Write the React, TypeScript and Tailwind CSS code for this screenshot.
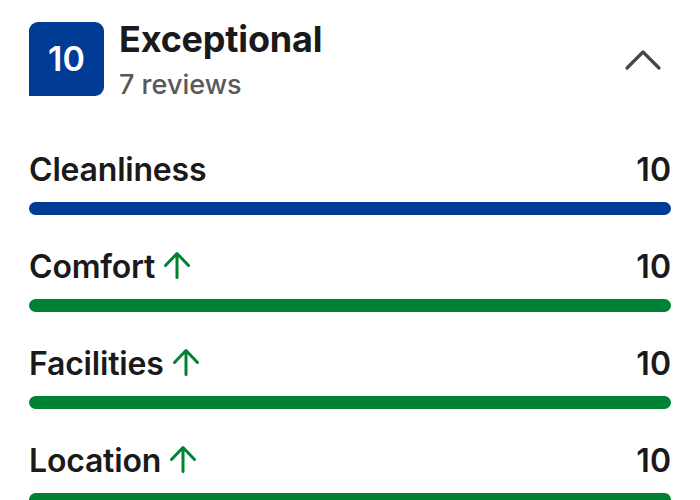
import React from "react";

const rows = [
  { label: "Cleanliness", value: "10", color: "bg-[#003b95]", up: false },
  { label: "Comfort", value: "10", color: "bg-[#008234]", up: true },
  { label: "Facilities", value: "10", color: "bg-[#008234]", up: true },
  { label: "Location", value: "10", color: "bg-[#008234]", up: true },
];

function UpArrow() {
  return (
    <svg width="28" height="28" viewBox="0 0 28 28" fill="none" className="ml-[8px] mb-[4px]">
      <path d="M14 26.5V3M2.5 14.5L14 2.5L25.5 14.5" stroke="#008234" strokeWidth="3" strokeLinecap="round" strokeLinejoin="round" />
    </svg>
  );
}

export default function App() {
  return (
    <div
      className="w-[700px] h-[500px] bg-white overflow-hidden text-[#1a1a1a]"
      style={{ fontFamily: "Inter, 'Liberation Sans', sans-serif" }}
    >
      <div className="pl-[29px] pr-[29px] pt-[22px]">
        <div className="flex items-start">
          <div className="w-[75px] h-[74px] bg-[#003b95] rounded-t-[9px] rounded-br-[9px] flex items-center justify-center text-white text-[34px] font-semibold leading-none">
            10
          </div>
          <div className="ml-[15px] flex flex-col">
            <div className="text-[36px] font-bold leading-none tracking-[-0.2px] -mt-[1px]">Exceptional</div>
            <div className="text-[27px] font-medium leading-none text-[#595959] mt-[14px]">7 reviews</div>
          </div>
          <div className="ml-auto mt-[27px] mr-[9px]">
            <svg width="38" height="22" viewBox="0 0 38 22" fill="none">
              <path d="M3 19L19 3L35 19" stroke="#474747" strokeWidth="3.2" strokeLinecap="round" strokeLinejoin="round" />
            </svg>
          </div>
        </div>
        <div className="mt-[56px] flex flex-col gap-[36px]">
          {rows.map((r) => (
            <div key={r.label}>
              <div className="flex items-end justify-between">
                <div className="flex items-end">
                  <span className="text-[32px] font-semibold leading-none tracking-[-0.2px]">{r.label}</span>
                  {r.up && <UpArrow />}
                </div>
                <span className="text-[32px] font-semibold leading-none">{r.value}</span>
              </div>
              <div className={`mt-[16px] h-[13px] rounded-full ${r.color}`} />
            </div>
          ))}
        </div>
      </div>
    </div>
  );
}
